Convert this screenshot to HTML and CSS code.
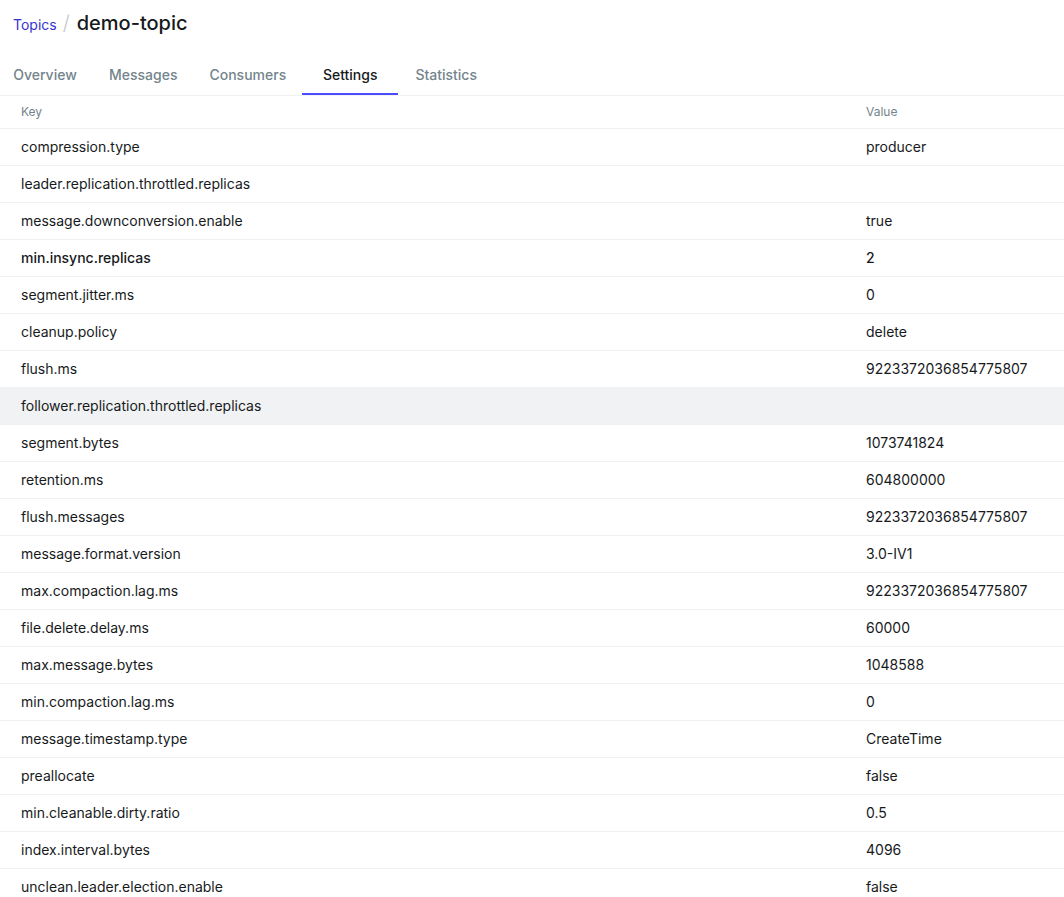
FILE: index.html
```html
<!DOCTYPE html>
<html lang="en">
<head>
<meta charset="utf-8">
<title>demo-topic</title>
<link rel="stylesheet" href="styles.css">
</head>
<body>
<div class="page">
  <div class="crumbs">
    <a class="crumb-link" href="#">Topics</a>
    <span class="crumb-sep">/</span>
    <h1 class="crumb-title">demo-topic</h1>
  </div>
  <nav class="tabs">
    <a class="tab" href="#">Overview</a>
    <a class="tab" href="#">Messages</a>
    <a class="tab" href="#">Consumers</a>
    <a class="tab active" href="#">Settings</a>
    <a class="tab" href="#">Statistics</a>
  </nav>
  <table class="settings">
    <thead>
      <tr><th class="col-key">Key</th><th>Value</th></tr>
    </thead>
    <tbody>
      <tr><td>compression.type</td><td>producer</td></tr>
      <tr><td>leader.replication.throttled.replicas</td><td></td></tr>
      <tr><td>message.downconversion.enable</td><td>true</td></tr>
      <tr class="custom"><td>min.insync.replicas</td><td>2</td></tr>
      <tr><td>segment.jitter.ms</td><td>0</td></tr>
      <tr><td>cleanup.policy</td><td>delete</td></tr>
      <tr><td>flush.ms</td><td>9223372036854775807</td></tr>
      <tr class="hover"><td>follower.replication.throttled.replicas</td><td></td></tr>
      <tr><td>segment.bytes</td><td>1073741824</td></tr>
      <tr><td>retention.ms</td><td>604800000</td></tr>
      <tr><td>flush.messages</td><td>9223372036854775807</td></tr>
      <tr><td>message.format.version</td><td>3.0-IV1</td></tr>
      <tr><td>max.compaction.lag.ms</td><td>9223372036854775807</td></tr>
      <tr><td>file.delete.delay.ms</td><td>60000</td></tr>
      <tr><td>max.message.bytes</td><td>1048588</td></tr>
      <tr><td>min.compaction.lag.ms</td><td>0</td></tr>
      <tr><td>message.timestamp.type</td><td>CreateTime</td></tr>
      <tr><td>preallocate</td><td>false</td></tr>
      <tr><td>min.cleanable.dirty.ratio</td><td>0.5</td></tr>
      <tr><td>index.interval.bytes</td><td>4096</td></tr>
      <tr><td>unclean.leader.election.enable</td><td>false</td></tr>
      <tr><td>retention.bytes</td><td>-1</td></tr>
      <tr><td>delete.retention.ms</td><td>86400000</td></tr>
    </tbody>
  </table>
</div>
</body>
</html>
```

FILE: styles.css
```css
html, body {
  margin: 0;
  padding: 0;
  background: #ffffff;
}

body {
  font-family: Inter, "Liberation Sans", sans-serif;
  color: #171a1c;
  font-size: 14px;
}

.page {
  width: 1064px;
}

.crumbs {
  height: 45px;
  display: flex;
  align-items: center;
  padding: 0 13px;
}

.crumb-link {
  color: #3434d0;
  text-decoration: none;
  font-size: 14px;
  line-height: 20px;
  padding-top: 5px;
}

.crumb-sep {
  color: #c4c8cc;
  font-size: 20px;
  font-weight: 300;
  margin: 0 7px 0 6px;
  line-height: 24px;
}

.crumb-title {
  margin: 0;
  font-size: 20px;
  font-weight: 500;
  line-height: 24px;
  color: #171a1c;
}

.tabs {
  display: flex;
  margin-top: 10px;
  margin-left: -3px;
  border-bottom: 1px solid #f1f2f3;
  height: 40px;
  width: 1067px;
}

.tab {
  box-sizing: border-box;
  min-width: 96px;
  height: 40px;
  padding: 1px 16px 0;
  display: flex;
  align-items: center;
  justify-content: center;
  font-size: 14px;
  font-weight: 500;
  color: #73848c;
  text-decoration: none;
  border-bottom: 2px solid transparent;
}

.tab.active {
  color: #171a1c;
  border-bottom-color: #4c4cff;
}

.settings {
  width: 1064px;
  border-collapse: collapse;
  table-layout: fixed;
}

.settings th {
  height: 30px;
  padding: 0 0 2px 21px;
  text-align: left;
  font-size: 12px;
  font-weight: 400;
  color: #73848c;
  border-bottom: 1px solid #f1f2f3;
  vertical-align: middle;
}

.settings .col-key {
  width: 824px;
}

.settings td {
  height: 34px;
  padding: 0 0 2px 21px;
  font-size: 14px;
  color: #171a1c;
  border-bottom: 1px solid #f1f2f3;
  vertical-align: middle;
  white-space: nowrap;
}

.settings tr.custom td {
  font-weight: 500;
}

.settings tr.hover td {
  background: #f1f2f3;
}
```
